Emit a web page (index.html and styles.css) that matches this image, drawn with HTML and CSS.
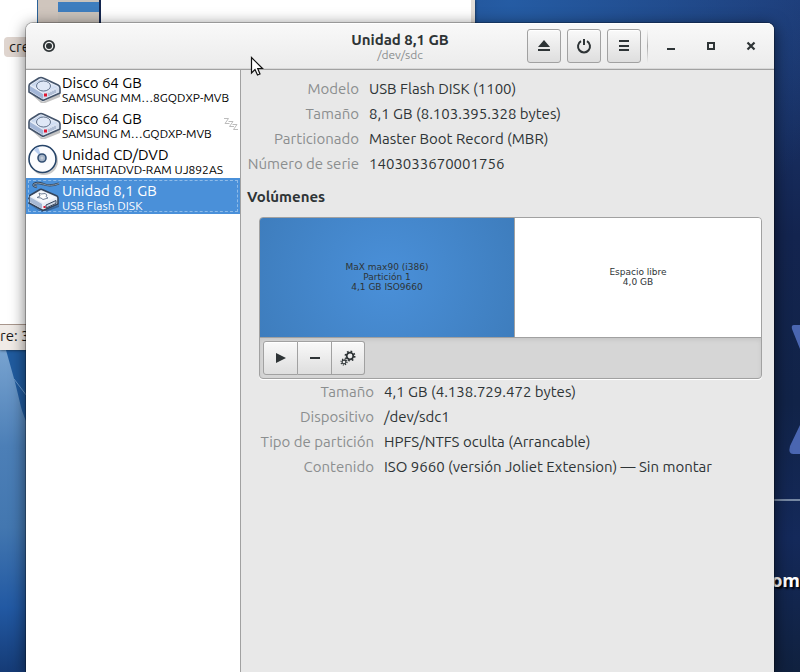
FILE: index.html
```
<!DOCTYPE html>
<html lang="es">
<head>
<meta charset="utf-8">
<meta name="viewport" content="width=device-width, initial-scale=1">
<title>Unidad 8,1 GB</title>
<link rel="stylesheet" href="styles.css">
</head>
<body>
<svg class="symbols" aria-hidden="true">
  <defs>
    <linearGradient id="diskTop" x1="0" y1="0" x2="1" y2="1"><stop offset="0" stop-color="#9bb5dc"/><stop offset=".45" stop-color="#edf2fb"/><stop offset="1" stop-color="#b4c8ea"/></linearGradient>
    <symbol id="disk" viewBox="0 0 34 32">
      <path d="M2 21 15 30 32 21V25L17 31 13 31Z" fill="#666" opacity=".4"/>
      <path d="M1 14Q1 12 3 11L11 6Q13 5 15 6L30 13Q32 14 32 16V21L15 28.500 1 20Z" fill="#e7edf7" stroke="#44546b" stroke-width="1.600" stroke-linejoin="round"/>
      <path d="M3 13 13 7 30 15 15 21Z" fill="url(#diskTop)"/>
      <path d="M2 14 15 22V27L2 19Z" fill="#a3b6d7"/>
      <path d="M15 22 31 15V20L15 27Z" fill="#d3ddee"/>
      <ellipse cx="15.500" cy="14" rx="7" ry="5" fill="#dfe8f7" stroke="#64748d"/>
      <path d="M21 21v3M23 20v3M25 19v3M27 18v3" stroke="#8e9fbc"/>
      <path d="M16 21.500h3v3h-3z" fill="#e01530"/>
    </symbol>
  </defs>
</svg>

<div class="desktop">
  <svg class="wallpaper wallpaper-left" viewBox="0 0 30 322" aria-hidden="true">
    <defs><linearGradient id="sky" x1="0" y1="0" x2="0" y2="1"><stop offset="0" stop-color="#78a3d0"/><stop offset=".3" stop-color="#4c7fb7"/><stop offset=".55" stop-color="#4377b0"/><stop offset=".8" stop-color="#2259a3"/><stop offset="1" stop-color="#153b76"/></linearGradient></defs>
    <path d="M0 0h30v322H0z" fill="url(#sky)"/>
    <path d="M6 0H30V80Q23 65 21 57L15 32Z" fill="#205b9f"/>
    <path d="M14 29 30 50" stroke="#6d9acb"/>
  </svg>
  <svg class="wallpaper wallpaper-right" viewBox="0 0 26 180" aria-hidden="true">
    <path d="M26 1 20 1Q17 1 18 5L26 25ZM26 101 16 122Q14 130 19 130H26Z" fill="#4a66b1"/>
    <path d="M0 176H26" stroke="#7688a3" stroke-width="2"/>
  </svg>
  <span class="wallpaper-text">om</span>

  <div class="back-window" aria-hidden="true">
    <div class="back-files">
      <div class="thumbnail"><div class="thumbnail-page"></div></div>
      <span class="file-name">cre</span>
    </div>
    <div class="back-status">re: 3</div>
  </div>

  <div class="window">
    <header class="titlebar">
      <div class="titlebar-start">
        <button class="flat" type="button" aria-label="Menú de la aplicación">
          <svg width="14" height="14" viewBox="0 0 14 14"><circle cx="7" cy="7" r="5.200" fill="none" stroke="#2e3436" stroke-width="1.800"/><circle cx="7" cy="7" r="3" fill="#2e3436"/></svg>
        </button>
      </div>
      <div class="titles"><h1>Unidad 8,1 GB</h1><p>/dev/sdc</p></div>
      <div class="titlebar-end">
        <button class="raised" type="button" aria-label="Expulsar"><svg width="16" height="16" viewBox="0 0 16 16"><path d="M8 2 14 9H2ZM2 11h12v2H2z" fill="#2e3436"/></svg></button>
        <button class="raised" type="button" aria-label="Apagar"><svg width="16" height="16" viewBox="0 0 16 16"><path d="M5 3.2A6 6 0 1 0 11 3.2M8 1V7" fill="none" stroke="#2e3436" stroke-width="2"/></svg></button>
        <button class="raised" type="button" aria-label="Menú"><svg width="16" height="16" viewBox="0 0 16 16"><path d="M3 2h10v2H3zM3 7h10v2H3zM3 11h10v2H3z" fill="#2e3436"/></svg></button>
        <span class="separator"></span>
        <div class="window-controls">
          <button class="flat" type="button" aria-label="Minimizar"><svg width="16" height="16" viewBox="0 0 16 16"><path d="M4 10h8v2H4z" fill="#2e3436"/></svg></button>
          <button class="flat" type="button" aria-label="Maximizar"><svg width="16" height="16" viewBox="0 0 16 16"><path d="M5 5h6v6H5z" fill="none" stroke="#2e3436" stroke-width="2"/></svg></button>
          <button class="flat" type="button" aria-label="Cerrar"><svg width="16" height="16" viewBox="0 0 16 16"><path d="M4.5 4.5 11.5 11.5M11.5 4.5 4.5 11.5" stroke="#2e3436" stroke-width="2.2"/></svg></button>
        </div>
      </div>
    </header>

    <div class="content">
      <nav class="drives" aria-label="Unidades">
        <a class="drive" href="#disk1">
          <svg class="drive-icon" width="34" height="32"><use href="#disk"/></svg>
          <span class="drive-text"><span class="drive-name">Disco 64 GB</span><span class="drive-model">SAMSUNG MM…8GQDXP-MVB</span></span>
        </a>
        <a class="drive" href="#disk2">
          <svg class="drive-icon" width="34" height="32"><use href="#disk"/></svg>
          <span class="drive-text"><span class="drive-name">Disco 64 GB</span><span class="drive-model">SAMSUNG M…GQDXP-MVB</span></span>
          <svg class="sleep" width="15" height="15" viewBox="0 0 15 15"><path d="M1 1.500H5.500L2 6.500H6.500M5.500 4.500H10L6.500 9.500H11M9.500 7.500H14L10.500 12.500H15" fill="none" stroke="#bcbcbc"/></svg>
        </a>
        <a class="drive" href="#cd">
          <svg class="drive-icon" width="34" height="32" viewBox="0 0 34 32">
            <circle cx="16" cy="17" r="14" fill="#888" opacity=".45"/>
            <circle cx="14.500" cy="15" r="13.500" fill="#fbfcfe" stroke="#274569" stroke-width="1.600"/>
            <path d="M14 14 6 6Q7 4 10 3Z" fill="#bacff0"/>
            <circle cx="14" cy="14" r="4" fill="#a3b2c5" stroke="#324f73" stroke-width="1.600"/><circle cx="14" cy="14" r="1.500" fill="#c5cdd8"/>
          </svg>
          <span class="drive-text"><span class="drive-name">Unidad CD/DVD</span><span class="drive-model">MATSHITADVD-RAM UJ892AS</span></span>
        </a>
        <a class="drive selected" href="#usb" aria-current="true">
          <svg class="drive-icon" width="34" height="32" viewBox="0 0 34 32">
            <path d="M2 25 14 31.500 31 25V27L17 32H13Z" fill="#31527d" opacity=".7"/>
            <path d="M9 7Q4 6 6 4Q9 2 15 4Q22 7 31 3.500" fill="none" stroke="#34485f" stroke-width="2.400"/><path d="M9 7Q4 6 6 4Q9 2 15 4Q22 7 31 3.500" fill="none" stroke="#8295aa"/>
            <path d="M1 16 12 9.500Q13 9 14 9.500L29 16Q30 17 30 18V24L15 30.500 1 23Z" fill="#e9eef6" stroke="#34445b" stroke-width="1.600" stroke-linejoin="round"/>
            <path d="M3 16 13 11 28 17.500 15 23Z" fill="#f6f8fc"/><path d="M2 17 14 24V29L2 22Z" fill="#a7b9d4"/>
            <path d="M11 13 13 14 17 13.500 19 15 18 16.500 20 18 15 19.500 13 18 9 17.500 12 16Z" fill="#fff" stroke="#66768e" stroke-width=".9"/>
            <path d="M18 25 28 20.500V23.500L18 28Z" fill="#cbd5e4" stroke="#35465d"/><path d="M15.500 26h2v2h-2z" fill="#e01530"/>
          </svg>
          <span class="drive-text"><span class="drive-name">Unidad 8,1 GB</span><span class="drive-model">USB Flash DISK</span></span>
        </a>
      </nav>

      <main class="details">
        <dl class="properties">
          <dt>Modelo</dt><dd>USB Flash DISK (1100)</dd>
          <dt>Tamaño</dt><dd>8,1 GB (8.103.395.328 bytes)</dd>
          <dt>Particionado</dt><dd>Master Boot Record (MBR)</dd>
          <dt>Número de serie</dt><dd>1403033670001756</dd>
        </dl>
        <h2>Volúmenes</h2>
        <section class="volumes">
          <div class="volume-box">
            <div class="volume-map">
              <div class="volume active">MaX max90 (i386)<br>Partición 1<br>4,1 GB ISO9660</div>
              <div class="volume">Espacio libre<br>4,0 GB</div>
            </div>
            <div class="toolbar">
              <div class="button-group">
                <button class="raised" type="button" aria-label="Montar"><svg width="16" height="16" viewBox="0 0 16 16"><path d="M3 3 13 8 3 13Z" fill="#2e3436"/></svg></button>
                <button class="raised" type="button" aria-label="Eliminar partición"><svg width="16" height="16" viewBox="0 0 16 16"><path d="M3 7h10v2H3z" fill="#2e3436"/></svg></button>
                <button class="raised" type="button" aria-label="Más acciones"><svg width="16" height="16" viewBox="0 0 16 16" fill="none" stroke="#2e3436"><circle cx="10" cy="6" r="3.300" stroke-width="1.800"/><circle cx="10" cy="6" r="4.700" stroke-width="1.600" stroke-dasharray="1.700 1.990"/><circle cx="4" cy="12" r="1.900" stroke-width="1.100"/><circle cx="4" cy="12" r="3" stroke-width="1.200" stroke-dasharray="1.150 1.206"/></svg></button>
              </div>
            </div>
          </div>
          <dl class="properties volume-properties">
            <dt>Tamaño</dt><dd>4,1 GB (4.138.729.472 bytes)</dd>
            <dt>Dispositivo</dt><dd>/dev/sdc1</dd>
            <dt>Tipo de partición</dt><dd>HPFS/NTFS oculta (Arrancable)</dd>
            <dt>Contenido</dt><dd>ISO 9660 (versión Joliet Extension) — Sin montar</dd>
          </dl>
        </section>
      </main>
    </div>
  </div>
  <svg class="pointer" width="14" height="22" viewBox="0 0 14 22" aria-hidden="true"><path d="M1.500 1.500V17L5 13.500 7.500 19 10 18 7.700 12.500H12.500Z" fill="#fff" stroke="#111" stroke-width="1.200"/></svg>
</div>
</body>
</html>
```
FILE: styles.css
```
* { box-sizing: border-box; }
body, h1, h2, p, dl, dd { margin: 0; }
body {
  font: 15px/25px Ubuntu, "Noto Sans", sans-serif;
  color: #2e3436;
}
.symbols { position: absolute; width: 0; height: 0; }

.desktop {
  position: relative;
  display: flex;
  min-height: 100vh;
  padding: 23px 26px 0;
  overflow: hidden;
  background:
    radial-gradient(ellipse 340px 300px at 510px 0, #255ca4, transparent),
    linear-gradient(#1d3a75, #13244f 35%, #112348 60%, #14295a 80%, #10213f);
}
.wallpaper { position: absolute; }
.wallpaper-left { left: 0; top: 350px; width: 30px; height: 322px; }
.wallpaper-right { right: 0; top: 324px; width: 26px; height: 180px; }
.wallpaper-text {
  position: absolute;
  right: 0;
  top: 568px;
  color: #fff;
  font: 700 18px/25px "Open Sans", sans-serif;
  text-shadow: 2px 2px 2px #000;
}

.back-window {
  position: absolute;
  left: 0;
  top: 0;
  width: 475px;
  height: 350px;
  display: flex;
  flex-direction: column;
  background: #fff;
  border-right: 4px solid #e3ded9;
  box-shadow: 0 0 3px #102030;
  color: #1a1a1a;
}
.back-files { flex: 1; }
.thumbnail {
  width: 64px;
  height: 34px;
  margin-left: 37px;
  padding-left: 20px;
  background: #cfc5bd;
  border: solid #2a6299;
  border-width: 0 2px 0 1px;
  border-right-color: #14264f;
}
.thumbnail-page {
  height: 24px;
  background: linear-gradient(#c9c2bb 2px, #3e7dbe 2px 12px, #c9c2bb 12px);
}
.file-name {
  display: inline-block;
  height: 20px;
  margin-left: 4px;
  padding: 0 5px;
  border-radius: 4px;
  background: #dfd5cf;
  line-height: 20px;
}
.back-status {
  height: 26px;
  background: #f0ebe7;
  border-top: 1px solid #a8968c;
  line-height: 22px;
}

.window {
  position: relative;
  display: flex;
  flex: 1;
  flex-direction: column;
  min-width: 0;
  border-radius: 7px 7px 0 0;
  background: #e8e8e8;
  box-shadow: 0 0 0 1px rgb(0 0 0 / 25%), 0 3px 16px rgb(0 0 0 / 60%);
}
.titlebar {
  display: grid;
  grid-template-columns: 1fr auto 1fr;
  align-items: center;
  height: 47px;
  padding: 0 6px;
  border-bottom: 1px solid #a1a1a1;
  border-radius: 7px 7px 0 0;
  background: linear-gradient(#f9f9f9, #ebebeb);
  box-shadow: inset 0 1px #fff, inset 0 -1px #d8d8d8;
}
.titles { text-align: center; }
h1 { font-size: 15px; line-height: 17px; }
.titles p { color: #8b8e8f; font-size: 12px; line-height: 13px; }
.titlebar-end { display: flex; align-items: center; justify-content: flex-end; gap: 6px; }
.window-controls { display: flex; gap: 6px; }
.separator { width: 1px; height: 34px; background: linear-gradient(transparent, #a9a9a9, transparent); }
button {
  display: flex;
  align-items: center;
  justify-content: center;
  width: 34px;
  height: 34px;
  padding: 0;
  border: 0;
  background: none;
}
.raised {
  border: 1px solid #a1a1a1;
  border-radius: 3px;
  background: linear-gradient(#f9f9f9, #dedede);
  box-shadow: inset 0 1px #fff;
}

.content { display: flex; flex: 1; }
.drives {
  flex: 0 0 215px;
  border-right: 1px solid #a1a1a1;
  background: #fff;
}
.drive {
  position: relative;
  display: flex;
  align-items: center;
  height: 36px;
  padding: 0 2px;
  color: #000;
  text-decoration: none;
  white-space: nowrap;
}
.drive-icon { flex: none; }
.drive-text { display: flex; flex-direction: column; padding-top: 2px; }
.drive-name { line-height: 17px; }
.drive-model { font-size: 12px; line-height: 13px; }
.sleep { position: absolute; right: 2px; top: 11px; }
.selected {
  background: #4a90d9;
  color: #fff;
  outline: 1px dashed #8fbbe8;
  outline-offset: -3px;
}

.details { flex: 1; min-width: 0; padding: 6px 12px 0 6px; }
.properties { display: grid; grid-template-columns: 112px 1fr; column-gap: 10px; }
.properties dt { color: #8b8e8f; text-align: right; white-space: nowrap; }
h2 { margin: 8px 0; font-size: 15px; line-height: 25px; }
.volumes { margin-left: 12px; }
.volume-box {
  overflow: hidden;
  border: 1px solid #a1a1a1;
  border-radius: 4px;
  background: #d6d6d6;
  box-shadow: 0 1px #fff;
}
.volume-map {
  display: grid;
  grid-template-columns: 255fr 246fr;
  height: 120px;
  border-bottom: 1px solid #a1a1a1;
}
.volume {
  display: flex;
  align-items: center;
  justify-content: center;
  padding-bottom: 2px;
  background: #fff;
  font: 9px/10px "DejaVu Sans", sans-serif;
  text-align: center;
}
.active {
  border-right: 1px solid #a1a1a1;
  background: radial-gradient(circle, #4a90d9, #3e7dbd);
}
.toolbar { padding: 3px; box-shadow: inset 0 2px 4px #c5c5c5; }
.button-group { display: grid; grid-template-columns: 35px 34px 33px; }
.button-group .raised { width: auto; border-radius: 0; }
.button-group .raised + .raised { border-left: 0; }
.button-group .raised:first-child { border-radius: 3px 0 0 3px; }
.button-group .raised:last-child { border-radius: 0 3px 3px 0; }
.volume-properties { grid-template-columns: 115px 1fr; }
.pointer { position: absolute; left: 250px; top: 56px; }
```
